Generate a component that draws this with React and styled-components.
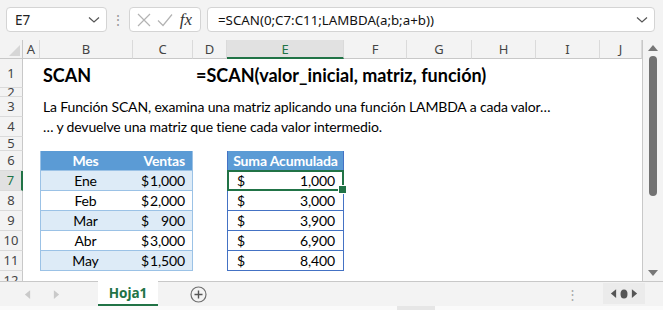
import styled, { createGlobalStyle } from "styled-components";

const GlobalStyle = createGlobalStyle`
  body {
    margin: 0;
    background: #f3f3f3;
    overflow: hidden;
  }
  * {
    box-sizing: border-box;
  }
`;

const COLS = [23, 17, 93, 60, 34, 117, 63, 65, 64, 64, 42];
const LETTERS = ["A", "B", "C", "D", "E", "F", "G", "H", "I", "J"];
const ROW_HEIGHTS = [29, 9, 20, 20, 14, 20, 20, 20, 20, 20, 20, 20];
const GREEN = "#217346";
const CELL_FONT = `Lato, "Liberation Sans", sans-serif`;
const UI_FONT = `"Noto Sans", "Open Sans", sans-serif`;

const sales = [
  { mes: "Ene", venta: "1,000", suma: "1,000" },
  { mes: "Feb", venta: "2,000", suma: "3,000" },
  { mes: "Mar", venta: "900", suma: "3,900" },
  { mes: "Abr", venta: "3,000", suma: "6,900" },
  { mes: "May", venta: "1,500", suma: "8,400" },
];

const Window = styled.div`
  width: 663px;
  height: 310px;
  display: flex;
  flex-direction: column;
  background: #f3f3f3;
`;

/* formula bar */
const FormulaBar = styled.div`
  height: 40px;
  display: flex;
  align-items: center;
  padding: 0 8px 1px 6px;
  font-family: ${UI_FONT};
`;

const Box = styled.div`
  height: 25px;
  background: #fff;
  border: 1px solid #d4d4d4;
  border-radius: 4px;
  display: flex;
  align-items: center;
`;

const NameBox = styled(Box)`
  width: 101px;
  padding: 0 6px 0 8px;
  justify-content: space-between;
  font-size: 13.5px;
  color: #222;
`;

const Grip = styled.div`
  width: 22px;
  display: flex;
  justify-content: center;
  color: #9a9a9a;
  font-size: 14px;
`;

const ActionBox = styled(Box)`
  width: 72px;
  padding: 0 6px 0 7px;
  justify-content: space-between;
  margin-right: 6px;
`;

const Fx = styled.i`
  font-family: "Liberation Serif", serif;
  font-size: 17px;
  color: #333;
  padding-right: 2px;
`;

const FormulaInput = styled(Box)`
  flex: 1;
  padding: 0 6px 0 10px;
  justify-content: space-between;
  font-size: 13.3px;
  color: #111;
`;

/* sheet */
const SheetArea = styled.div`
  height: 241px;
  display: flex;
`;

const Grid = styled.div`
  width: 642px;
  display: grid;
  grid-template-columns: ${COLS.map((c) => `${c}px`).join(" ")};
  grid-template-rows: 19px ${ROW_HEIGHTS.map((h) => `${h}px`).join(" ")};
  overflow: hidden;
  background: #fff;
  font-family: ${CELL_FONT};
`;

const Corner = styled.div`
  position: relative;
  background: #f3f3f3;
  border-right: 1px solid #c8c8c8;
  border-bottom: 1px solid #c8c8c8;
  svg {
    position: absolute;
    right: 2px;
    bottom: 2px;
  }
`;

const ColHead = styled.div`
  display: flex;
  align-items: center;
  justify-content: center;
  font-family: ${UI_FONT};
  font-size: 13px;
  color: ${(p) => (p.$active ? GREEN : "#444")};
  background: ${(p) => (p.$active ? "#e1e1e1" : "#f3f3f3")};
  border-right: 1px solid #dadada;
  border-bottom: ${(p) => (p.$active ? `2px solid ${GREEN}` : "1px solid #c8c8c8")};
`;

const RowHead = styled.div`
  display: flex;
  align-items: center;
  justify-content: center;
  overflow: hidden;
  font-family: ${UI_FONT};
  font-size: 13px;
  line-height: 1;
  color: ${(p) => (p.$active ? GREEN : "#444")};
  background: ${(p) => (p.$active ? "#e1e1e1" : "#f3f3f3")};
  border-bottom: 1px solid #dadada;
  border-right: ${(p) => (p.$active ? `2px solid ${GREEN}` : "1px solid #c8c8c8")};
`;

const Cell = styled.div`
  position: relative;
  display: flex;
  align-items: flex-end;
  justify-content: ${(p) => p.$align || "flex-start"};
  padding: 0 3px 2px;
  white-space: nowrap;
  font-size: ${(p) => p.$size || 14}px;
  letter-spacing: ${(p) => (p.$size ? 0 : -0.15)}px;
  font-weight: ${(p) => (p.$bold ? 700 : 400)};
  color: #000;
`;

const SalesCell = styled(Cell)`
  padding: 0 7px 1px 4px;
  background: ${(p) => (p.$head ? "#5b9bd5" : p.$stripe ? "#ddebf7" : "#fff")};
  color: ${(p) => (p.$head ? "#fff" : "#000")};
  border-bottom: 1px solid #9bc2e6;
  border-left: ${(p) => (p.$side === "left" ? "1px solid #9bc2e6" : "none")};
  border-right: ${(p) => (p.$side === "right" ? "1px solid #9bc2e6" : "none")};
`;

const SumCell = styled(Cell)`
  padding: ${(p) => (p.$head ? "0 0 1px" : "0 8px 1px 9px")};
  background: ${(p) => (p.$head ? "#5b9bd5" : "#fff")};
  color: ${(p) => (p.$head ? "#fff" : "#000")};
  border-left: 1px solid #4472c4;
  border-right: 1px solid #4472c4;
  border-bottom: 1px solid #4472c4;
  &::after {
    content: "";
    display: ${(p) => (p.$selected ? "block" : "none")};
    position: absolute;
    inset: -1px -1px -1px -1px;
    border: 2px solid ${GREEN};
    pointer-events: none;
  }
  &::before {
    content: "";
    display: ${(p) => (p.$selected ? "block" : "none")};
    position: absolute;
    right: -4px;
    bottom: -4px;
    width: 7px;
    height: 7px;
    background: ${GREEN};
    border: 1px solid #fff;
    z-index: 2;
  }
`;

const Money = styled.span`
  flex: 1;
  display: flex;
  justify-content: space-between;
  padding-left: ${(p) => p.$indent || 0}px;
`;

const VScroll = styled.div`
  width: 21px;
  border-left: 1px solid #c8c8c8;
  display: flex;
  flex-direction: column;
  align-items: center;
  padding: 4px 0 4px;
  background: #f3f3f3;
`;

const Thumb = styled.div`
  width: 8px;
  height: 140px;
  margin-top: 4px;
  border-radius: 4px;
  background: #727272;
`;

const ScrollSpacer = styled.div`
  flex: 1;
`;

/* tabs */
const TabBar = styled.div`
  height: 25px;
  display: flex;
  align-items: stretch;
  border-top: 1px solid #c8c8c8;
  font-family: ${UI_FONT};
`;

const TabNav = styled.div`
  width: 98px;
  display: flex;
  align-items: center;
  gap: 22px;
  padding-left: 24px;
`;

const Tab = styled.div`
  width: 60px;
  display: flex;
  align-items: center;
  justify-content: center;
  background: #fff;
  color: ${GREEN};
  font-weight: 700;
  font-size: 13.5px;
  border-bottom: 2px solid ${GREEN};
  margin-top: -1px;
  padding-top: 1px;
`;

const AddSheet = styled.div`
  width: 80px;
  display: flex;
  align-items: center;
  justify-content: center;
`;

const TabFill = styled.div`
  flex: 1;
  display: flex;
  align-items: center;
  justify-content: flex-end;
  padding-right: 24px;
  color: #a8a8a8;
  font-size: 13px;
`;

const ScrollNav = styled.div`
  width: 42px;
  margin: 1px 18px 2px 0;
  background: #ebebeb;
  display: flex;
  align-items: center;
  justify-content: center;
  gap: 3px;
`;

const BottomStrip = styled.div`
  height: 4px;
  background: #fafafa;
  display: flex;
`;

const StripThumb = styled.div`
  margin-left: 397px;
  width: 38px;
  background: #e6e6e6;
`;

const Chevron = ({ color = "#555" }) => (
  <svg width="12" height="8" viewBox="0 0 12 8">
    <polyline points="1,1.5 6,6 11,1.5" fill="none" stroke={color} strokeWidth="1.2" />
  </svg>
);

const Tri = ({ dir, color, size = 8 }) => {
  const vertical = dir === "up" || dir === "down";
  const pts = {
    left: "7,0 7,10 1,5",
    right: "1,0 1,10 7,5",
    up: "0,7 10,7 5,1",
    down: "0,1 10,1 5,7",
  }[dir];
  return (
    <svg
      width={vertical ? size + 2 : size}
      height={vertical ? size : size + 2}
      viewBox={vertical ? "0 0 10 8" : "0 0 8 10"}
    >
      <polygon points={pts} fill={color} />
    </svg>
  );
};

const Empty = () => <Cell />;

const App = () => {
  const rows = [];

  rows.push([
    <Empty key="a" />,
    <Cell key="b" $bold $size={18}>SCAN</Cell>,
    <Empty key="c" />,
    <Cell key="d" $bold $size={18}>=SCAN(valor_inicial, matriz, función)</Cell>,
  ]);
  rows.push([]);
  rows.push([
    <Empty key="a" />,
    <Cell key="b">La Función SCAN, examina una matriz aplicando una función LAMBDA a cada valor…</Cell>,
  ]);
  rows.push([
    <Empty key="a" />,
    <Cell key="b">… y devuelve una matriz que tiene cada valor intermedio.</Cell>,
  ]);
  rows.push([]);
  rows.push([
    <Empty key="a" />,
    <SalesCell key="b" $head $bold $side="left" $align="center">Mes</SalesCell>,
    <SalesCell key="c" $head $bold $side="right" $align="flex-end">Ventas</SalesCell>,
    <Empty key="d" />,
    <SumCell key="e" $head $bold $align="center">Suma Acumulada</SumCell>,
  ]);
  sales.forEach((r, i) => {
    rows.push([
      <Empty key="a" />,
      <SalesCell key="b" $side="left" $stripe={i % 2 === 0} $align="center">{r.mes}</SalesCell>,
      <SalesCell key="c" $side="right" $stripe={i % 2 === 0}>
        <Money $indent={4}><span>$</span><span>{r.venta}</span></Money>
      </SalesCell>,
      <Empty key="d" />,
      <SumCell key="e" $selected={i === 0}>
        <Money><span>$</span><span>{r.suma}</span></Money>
      </SumCell>,
    ]);
  });
  rows.push([]);

  return (
    <Window>
      <GlobalStyle />
      <FormulaBar>
        <NameBox>
          <span>E7</span>
          <Chevron />
        </NameBox>
        <Grip>⋮</Grip>
        <ActionBox>
          <svg width="14" height="14" viewBox="0 0 14 14">
            <path d="M1 1 L13 13 M13 1 L1 13" stroke="#b3b3b3" strokeWidth="1.2" />
          </svg>
          <svg width="16" height="14" viewBox="0 0 16 14">
            <polyline points="1,7.5 6,12.5 15,1.5" fill="none" stroke="#b3b3b3" strokeWidth="1.2" />
          </svg>
          <Fx>fx</Fx>
        </ActionBox>
        <FormulaInput>
          <span>=SCAN(0;C7:C11;LAMBDA(a;b;a+b))</span>
          <Chevron />
        </FormulaInput>
      </FormulaBar>

      <SheetArea>
        <Grid>
          <Corner>
            <svg width="11" height="11" viewBox="0 0 11 11">
              <polygon points="11,0 11,11 0,11" fill="#d6d6d6" />
            </svg>
          </Corner>
          {LETTERS.map((l) => (
            <ColHead key={l} $active={l === "E"}>{l}</ColHead>
          ))}
          {rows.map((cells, i) => {
            const filled = [...cells];
            while (filled.length < COLS.length - 1) filled.push(<Empty key={`x${filled.length}`} />);
            return [
              <RowHead key={`h${i}`} $active={i === 6}>{i + 1}</RowHead>,
              ...filled.map((c, j) => <c.type {...c.props} key={`${i}-${j}`} />),
            ];
          })}
        </Grid>
        <VScroll>
          <Tri dir="up" color="#777" size={8} />
          <Thumb />
          <ScrollSpacer />
          <Tri dir="down" color="#777" size={8} />
        </VScroll>
      </SheetArea>

      <TabBar>
        <TabNav>
          <Tri dir="left" color="#c9c9c9" size={7} />
          <Tri dir="right" color="#c9c9c9" size={7} />
        </TabNav>
        <Tab>Hoja1</Tab>
        <AddSheet>
          <svg width="17" height="17" viewBox="0 0 17 17">
            <circle cx="8.5" cy="8.5" r="7.5" fill="none" stroke="#6f6f6f" strokeWidth="1.2" />
            <path d="M8.5 4.5 V12.5 M4.5 8.5 H12.5" stroke="#555" strokeWidth="1.4" />
          </svg>
        </AddSheet>
        <TabFill>⋮</TabFill>
        <ScrollNav>
          <Tri dir="left" color="#555" size={7} />
          <svg width="8" height="10" viewBox="0 0 8 10">
            <ellipse cx="4" cy="5" rx="3.5" ry="4.5" fill="#555" />
          </svg>
          <Tri dir="right" color="#555" size={7} />
        </ScrollNav>
      </TabBar>
      <BottomStrip>
        <StripThumb />
      </BottomStrip>
    </Window>
  );
};

export default App;
